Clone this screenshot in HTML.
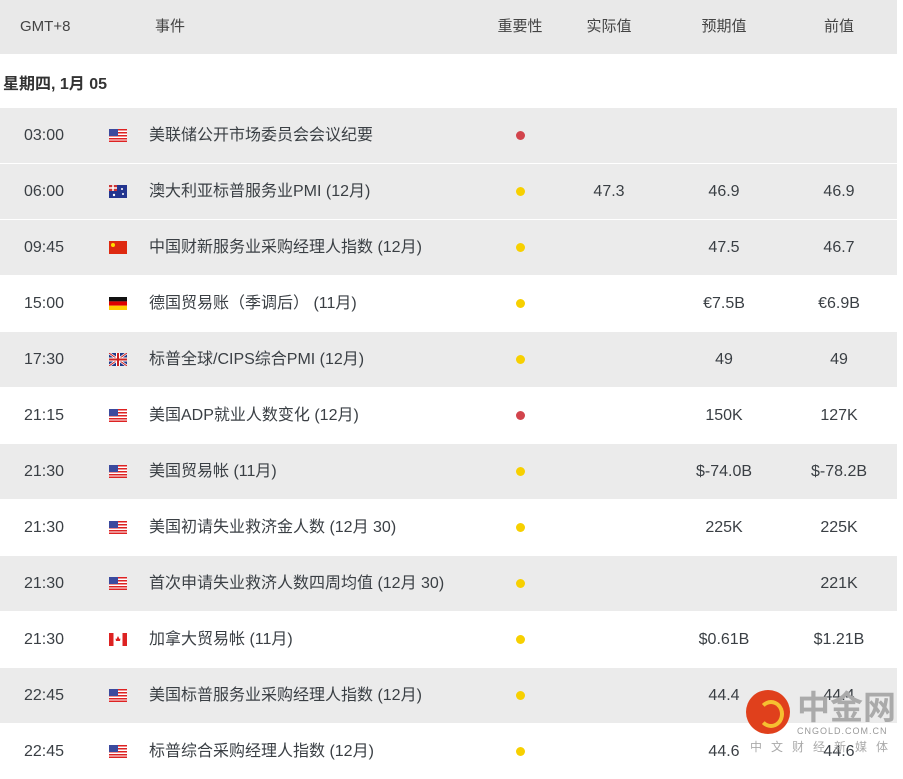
<!DOCTYPE html>
<html><head><meta charset="utf-8"><style>
body{margin:0;width:903px;height:761px;overflow:hidden;background:#fff;font-family:"Liberation Sans","Noto Sans CJK SC",sans-serif;color:#3a3f44;position:relative}
.hdr{position:absolute;left:0;top:0;width:897px;height:54px;background:#e9e9e9;font-size:15px;color:#444}
.hdr span{position:absolute;top:0;line-height:54px;height:54px;white-space:nowrap}
.date{position:absolute;left:3px;top:70px;font-size:16px;font-weight:bold;color:#333}
.row{position:absolute;left:0;width:897px;height:55px;font-size:16px}
.g{background:#ebebeb}
.row span{position:absolute;top:0;height:55px;line-height:55px;white-space:nowrap}
.c{transform:translateX(-50%)}
.dot{position:absolute;left:516px;top:23px;width:9px;height:9px;border-radius:50%}
.r{background:#d2444c}.y{background:#f7d000}
.flag{position:absolute;left:109px;top:21px;width:18px;height:13px}
.n{white-space:nowrap;position:absolute}
</style></head><body>
<div class="hdr"><span style="left:20px">GMT+8</span><span style="left:155px">事件</span><span class="c" style="left:520px">重要性</span><span class="c" style="left:609px">实际值</span><span class="c" style="left:724px">预期值</span><span class="c" style="left:839px">前值</span></div>
<div class="date">星期四, 1月 05</div>
<svg width="0" height="0" style="position:absolute"><defs>
<g id="us"><rect width="18" height="13" fill="#fff"/><g fill="#d22"><rect y="0" width="18" height="1.5"/><rect y="3" width="18" height="1.5"/><rect y="6" width="18" height="1.5"/><rect y="9" width="18" height="1.5"/><rect y="11.5" width="18" height="1.5"/></g><rect width="9" height="7" fill="#3b4a9e"/></g>
</defs></svg>
<div id="rows"></div>
<script>
var d=[["03:00","us","美联储公开市场委员会会议纪要","r","","",""],
["06:00","au","澳大利亚标普服务业PMI (12月)","y","47.3","46.9","46.9"],
["09:45","cn","中国财新服务业采购经理人指数 (12月)","y","","47.5","46.7"],
["15:00","de","德国贸易账（季调后） (11月)","y","","€7.5B","€6.9B"],
["17:30","gb","标普全球/CIPS综合PMI (12月)","y","","49","49"],
["21:15","us","美国ADP就业人数变化 (12月)","r","","150K","127K"],
["21:30","us","美国贸易帐 (11月)","y","","$-74.0B","$-78.2B"],
["21:30","us","美国初请失业救济金人数 (12月 30)","y","","225K","225K"],
["21:30","us","首次申请失业救济人数四周均值 (12月 30)","y","","","221K"],
["21:30","ca","加拿大贸易帐 (11月)","y","","$0.61B","$1.21B"],
["22:45","us","美国标普服务业采购经理人指数 (12月)","y","","44.4","44.4"],
["22:45","us","标普综合采购经理人指数 (12月)","y","","44.6","44.6"]];
var f={us:'<svg class="flag" viewBox="0 0 18 13"><use href="#us"/></svg>',
au:'<svg class="flag" viewBox="0 0 18 13"><rect width="18" height="13" fill="#23358f"/><rect width="8" height="6" fill="#c33"/><path d="M0 3h8M4 0v6" stroke="#fff" stroke-width="1.5"/><circle cx="13" cy="4" r="1" fill="#fff"/><circle cx="14" cy="9" r="1" fill="#fff"/><circle cx="5" cy="10" r="1.2" fill="#fff"/></svg>',
cn:'<svg class="flag" viewBox="0 0 18 13"><rect width="18" height="13" fill="#de2910"/><circle cx="4" cy="4" r="2" fill="#ffde00"/></svg>',
de:'<svg class="flag" viewBox="0 0 18 13"><rect width="18" height="4.4" fill="#111"/><rect y="4.4" width="18" height="4.3" fill="#d00"/><rect y="8.7" width="18" height="4.3" fill="#fc0"/></svg>',
gb:'<svg class="flag" viewBox="0 0 18 13"><rect width="18" height="13" fill="#1f3a8a"/><path d="M0 0L18 13M18 0L0 13" stroke="#fff" stroke-width="2.5"/><path d="M0 0L18 13M18 0L0 13" stroke="#c22" stroke-width="1"/><path d="M9 0v13M0 6.5h18" stroke="#fff" stroke-width="4"/><path d="M9 0v13M0 6.5h18" stroke="#c22" stroke-width="2"/></svg>',
ca:'<svg class="flag" viewBox="0 0 18 13"><rect width="18" height="13" fill="#fff"/><rect width="4.5" height="13" fill="#d22"/><rect x="13.5" width="4.5" height="13" fill="#d22"/><path d="M9 3l1.5 3 1-.5-.5 2.5H7l-.5-2.5 1 .5z" fill="#d22"/></svg>'};
var h="",tops=[108,164,220,276,332,388,444,500,556,612,668,724];
d.forEach(function(r,i){var g=(i<3||i%2==0)?" g":"";
h+='<div class="row'+g+'" style="top:'+tops[i]+'px"><span class="c" style="left:44px">'+r[0]+'</span>'+f[r[1]]+'<span style="left:149px">'+r[2]+'</span><div class="dot '+r[3]+'"></div><span class="c" style="left:609px">'+r[4]+'</span><span class="c" style="left:724px">'+r[5]+'</span><span class="c" style="left:839px">'+r[6]+'</span></div>';});
document.getElementById("rows").innerHTML=h;
</script>
<div style="position:absolute;left:746px;top:690px;width:44px;height:44px;border-radius:50%;background:#e0401c"><div style="position:absolute;left:12px;top:10px;width:18px;height:20px;border:4px solid #f6c030;border-radius:50%;border-left-color:transparent"></div></div>
<div class="n" style="left:797px;top:690px;font-size:33px;line-height:36px;font-weight:bold;color:#aaa">中金网</div>
<div class="n" style="left:797px;top:726px;font-size:9px;color:#999;letter-spacing:1px">CNGOLD.COM.CN</div>
<div class="n" style="left:750px;top:738px;font-size:12px;color:#aaa;letter-spacing:9px">中文财经新媒体</div>
</body></html>
